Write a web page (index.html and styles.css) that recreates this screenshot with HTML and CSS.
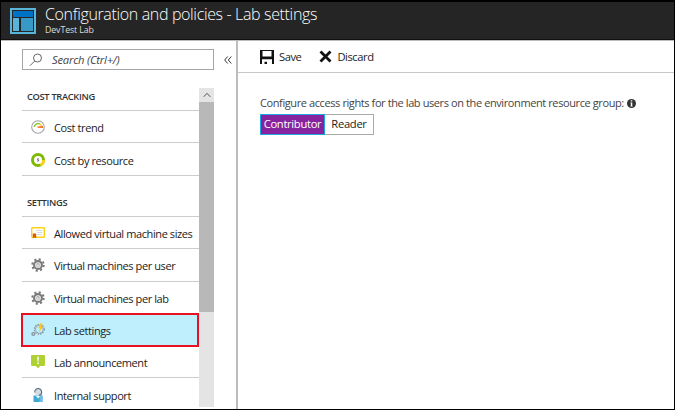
FILE: index.html
```html
<!DOCTYPE html>
<html lang="en">
<head>
<meta charset="utf-8">
<title>Lab settings</title>
<link rel="stylesheet" href="styles.css">
</head>
<body>
<div class="window">
  <header class="header">
    <svg class="logo" width="26" height="26" viewBox="0 0 26 26"><path fill="#59b4d9" d="M0 0h26v26H0z"/><path fill="#252525" d="M2 2h22v22H2z"/><path fill="#0072c6" d="M3 3h20v6H3z"/><path fill="#59b4d9" d="M3 10h6v13H3z"/><path fill="#3999c6" d="M11 10h12v13H11z"/></svg>
    <div class="heading">
      <h1 class="title">Configuration and policies - Lab settings</h1>
      <p class="subtitle">DevTest Lab</p>
    </div>
  </header>
  <div class="body">
    <aside class="sidebar">
      <div class="search-row">
        <div class="search">
          <svg width="14" height="14" viewBox="0 0 14 14" fill="none" stroke="#666"><circle cx="8.5" cy="5" r="4"/><path d="M5.7 8 1 12.7"/></svg>
          <span>Search (Ctrl+/)</span>
        </div>
        <svg class="collapse" width="8" height="8" viewBox="0 0 8 8" fill="none" stroke="#333"><path d="M3.7.5.7 4l3 3.5M7.3.5l-3 3.5 3 3.5"/></svg>
      </div>
      <div class="nav">
        <div class="menu">
          <h2 class="group">COST TRACKING</h2>
          <div class="item">
            <svg width="14" height="14" viewBox="0 0 14 14" fill="none"><circle cx="7" cy="7" r="6.3" fill="#fff" stroke="#a2a6ab" stroke-width="1.1"/><path d="M3.2 7a3.9 3.9 0 0 1 5.6-3" stroke="#8cc832" stroke-width="1.5"/><path d="M9 4.1a4 4 0 0 1 1.7 1.8" stroke="#fcd116" stroke-width="1.5"/><path fill="#f26a1b" d="M6.5 6.5 12 6v2l-5.5-.2z"/></svg>
            <span>Cost trend</span>
          </div>
          <div class="item">
            <svg width="14" height="14" viewBox="0 0 14 14" fill="none"><circle cx="7" cy="7" r="7" fill="#7fba00"/><path fill="#fcd116" d="M7 7h7a7 7 0 0 1-4 6.3z"/><circle cx="7" cy="7" r="4" fill="#fff"/><path d="M8 5.8H6.5v1.1h1.1v1.2H6" stroke="#555" stroke-width=".7"/></svg>
            <span>Cost by resource</span>
          </div>
          <h2 class="group second">SETTINGS</h2>
          <div class="item">
            <svg width="14" height="14" viewBox="0 0 14 14" fill="none"><rect x=".7" y="1.7" width="12.6" height="9.6" rx=".6" fill="#fff" stroke="#fcd116" stroke-width="1.4"/><path d="M5 4.5h6.5M6 6.5h5.5M6 8.5h5" stroke="#ccd2d8" stroke-width=".8"/><path fill="#dd5900" d="M1.8 7.5h3.4v5L3.5 11.2 1.8 12.5z"/></svg>
            <span>Allowed virtual machine sizes</span>
          </div>
          <div class="item">
            <svg width="14" height="14" viewBox="0 0 14 14" fill="none" stroke="#7a7a7a"><circle cx="7" cy="7" r="5.7" stroke-width="2" stroke-dasharray="2.1 2.377"/><circle cx="7" cy="7" r="3.9" stroke-width="2.1"/><circle cx="7" cy="7" r="1.8" stroke="#b0b0b0" stroke-width=".8"/><path d="M7 5.5v2" stroke="#888"/></svg>
            <span>Virtual machines per user</span>
          </div>
          <div class="item">
            <svg width="14" height="14" viewBox="0 0 14 14" fill="none" stroke="#7a7a7a"><circle cx="7" cy="7" r="5.7" stroke-width="2" stroke-dasharray="2.1 2.377"/><circle cx="7" cy="7" r="3.9" stroke-width="2.1"/><circle cx="7" cy="7" r="1.8" stroke="#b0b0b0" stroke-width=".8"/><path d="M7 5.5v2" stroke="#888"/></svg>
            <span>Virtual machines per lab</span>
          </div>
          <div class="item selected">
            <svg width="14" height="14" viewBox="0 0 14 14" fill="none" stroke="#85939b"><circle cx="8.3" cy="6.3" r="4.9" stroke-width="1.2" stroke-dasharray="1.6 .97"/><circle cx="8.3" cy="6.3" r="3.9" stroke-width=".7"/><circle cx="2.3" cy="11" r="1.4" stroke-width="1.3"/><path fill="#ffc31a" stroke="none" d="m9.5.2 2.2.5-1 3.2 1.1.3L8 9l.8-3.8-1.4-.3z"/></svg>
            <span>Lab settings</span>
          </div>
          <div class="item">
            <svg width="14" height="14" viewBox="0 0 14 14"><path fill="#b0d136" d="M1 0h12q1 0 1 1v9q0 1-1 1H9l-2 2.6L5 11H1q-1 0-1-1V1q0-1 1-1z"/><path fill="#fff" d="M6.2 1.8h1.7l-.3 4.8H6.5zM6.3 7.6h1.5V9H6.3z"/></svg>
            <span>Lab announcement</span>
          </div>
          <div class="item last">
            <svg width="14" height="14" viewBox="0 0 14 14"><path fill="#3fa7d6" d="M2.5 7.5h9V14h-9z"/><path fill="#6bbde3" d="M8.5 7.5h3V14h-3z"/><circle cx="7" cy="4.4" r="3" fill="#d3dce2"/><path d="M3.7 4.5C3.5-.6 10.6-.6 10.6 4.7c0 1.8-1 2.3-2.7 2.4" fill="none" stroke="#5f7180" stroke-width="1.2"/><path fill="#fff" d="m5 8 2 2.6L9 8z"/></svg>
            <span>Internal support</span>
          </div>
        </div>
        <div class="scrollbar">
          <div class="scroll-up"><svg width="8" height="6" viewBox="0 0 8 6" fill="none" stroke="#555"><path d="m.7 4.8 3.3-3.5 3.3 3.5"/></svg></div>
          <div class="thumb"></div>
        </div>
      </div>
    </aside>
    <main class="main">
      <div class="toolbar">
        <svg width="14" height="14" viewBox="0 0 14 14"><path fill="#111" d="M0 0h14v14H0z"/><path fill="#fff" d="M2.5 1h9v5.5h-9zM2 9.3h10V14H7v-2.2H4.5V14H2z"/></svg>
        <span class="save">Save</span>
        <svg width="13" height="13" viewBox="0 0 13 13"><path d="m1.5 1.5 10 10m0-10-10 10" stroke="#111" stroke-width="2.8"/></svg>
        <span class="discard">Discard</span>
      </div>
      <div class="content">
        <div class="prompt"><span>Configure access rights for the lab users on the environment resource group:</span>
          <svg width="9" height="9" viewBox="0 0 8 8"><circle cx="4" cy="4" r="4" fill="#333"/><path fill="#fff" d="M3.3 1.2h1.4v1.1H3.3zM3 3h1.7v3H5v.7H3V6h.4V3.7H3z"/></svg>
        </div>
        <div class="toggle"><span class="option on">Contributor</span><span class="option off">Reader</span></div>
      </div>
    </main>
  </div>
</div>
</body>
</html>
```
FILE: styles.css
```css
* { box-sizing: border-box; }
body { margin: 0; font: 11.2px/16px "Open Sans", "Noto Sans", sans-serif; color: #222; }
h1, h2, p { margin: 0; font-weight: 400; }
svg { flex: none; display: block; }
span { white-space: nowrap; }
.window { width: 675px; height: 410px; border: 1px solid #000; border-top-width: 2px; background: #fff; overflow: hidden; display: flex; flex-direction: column; }
.header { height: 38px; flex: none; background: #252525; display: flex; padding: 6px 0 0 9px; gap: 9px; border-bottom: 1px solid #111; }
.title { font-size: 16px; line-height: 18px; font-weight: 300; color: #fff; letter-spacing: -.35px; margin-top: -3px; white-space: nowrap; }
.subtitle { font-size: 8.8px; line-height: 12px; color: #ddd; letter-spacing: -.1px; margin-top: 1px; }
.body { flex: 1; display: flex; min-height: 0; border-top: 1px solid #bbb; }
.sidebar { width: 237px; border-right: 2px solid #bdbdbd; padding: 8px 0 0 21px; }
.search-row { display: flex; align-items: center; }
.search { width: 192px; height: 21px; border: 1px solid #a6a6a6; display: flex; align-items: center; padding-left: 6px; gap: 9px; font-style: italic; color: #444; letter-spacing: -.2px; }
.collapse { margin-left: 10px; }
.nav { display: flex; margin-top: 18px; height: 319px; }
.menu { width: 177px; }
.group { font-size: 9.3px; line-height: 18px; height: 23px; padding-left: 5px; border-bottom: 1px solid #ccc; letter-spacing: -.32px; font-weight: 600; color: #333; }
.group.second { height: 41px; padding-top: 18px; }
.item { height: 32.4px; border-bottom: 1px solid #ccc; display: flex; align-items: center; gap: 9px; padding: 3px 0 0 9px; font-size: 11px; letter-spacing: -.4px; }
.item svg { margin-top: -2px; }
.item.selected { height: 34px; margin: -1px 0 -1px -1px; width: 178px; border: 2px solid #e81123; background: #bfeffc; padding: 2px 0 0 8px; }
.item.last { border: 0; }
.scrollbar { width: 15px; background: #e4e4e4; }
.scroll-up { height: 14px; display: flex; align-items: center; justify-content: center; }
.thumb { height: 210px; background: #b8b8b8; }
.main { flex: 1; min-width: 0; }
.toolbar { height: 32px; border-bottom: 1px solid #c8c8c8; display: flex; align-items: center; padding-left: 22px; letter-spacing: -.45px; }
.save { margin: 0 18px 0 5px; }
.discard { margin-left: 5px; }
.content { padding: 22px 0 0 22px; }
.prompt { display: flex; align-items: center; gap: 3px; color: #444; font-size: 11px; letter-spacing: -.4px; }
.toggle { display: flex; height: 21px; margin-top: 3px; line-height: 18px; letter-spacing: -.3px; }
.option { text-align: center; border: 1px solid #aaa; }
.on { width: 65px; background: #8624a0; color: #fff; border-color: #20a5dc; }
.off { width: 49px; border-left: 0; }
```
